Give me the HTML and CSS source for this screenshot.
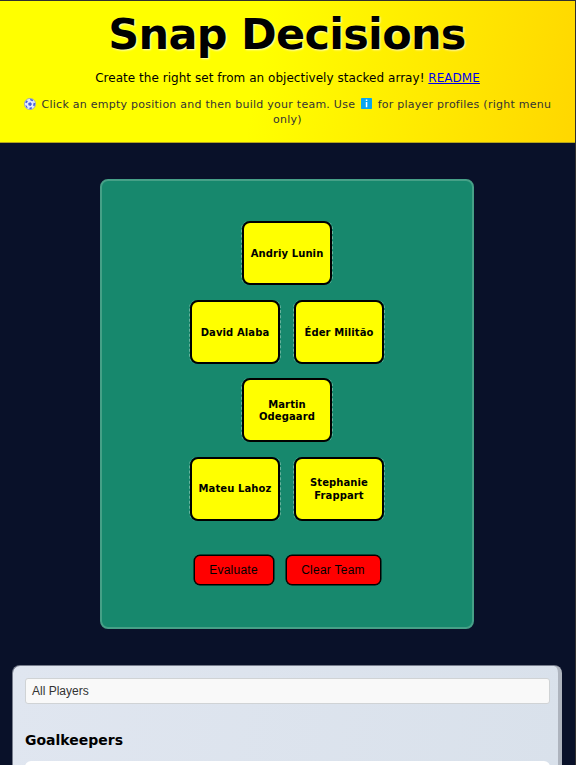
FILE: index.html
```html
<!DOCTYPE html>
<html lang="en">
<head>
<meta charset="utf-8">
<title>Snap Decisions</title>
<link rel="stylesheet" href="styles.css">
</head>
<body>
<header class="hero">
  <h1 class="title">Snap Decisions</h1>
  <p class="tagline">Create the right set from an objectively stacked array! <a href="#">README</a></p>
  <p class="hint"><svg class="ball" viewBox="0 0 12 12"><circle cx="6" cy="6" r="5.6" fill="#e4eafa" stroke="#8f9bc0" stroke-width=".7"/><path d="M4.3 5.1 6.6 4.3 8 6.1 6.6 8 4.4 7.3zM1 4.2 2.7 2.2 3.9 3.4 2.5 5.3zM6 .8 9.2 1.8 8.7 3.3 6.5 2.6zM9.6 4.8 11.3 5.3 10.5 8.5 9.1 7.4zM5.7 9.4 8 9.3 7.5 11.2 5.3 11.1zM1.2 7.3 2.8 7.8 3.7 9.9 2.5 9.8z" fill="#4560e0"/></svg><span> Click an empty position and then build your team. Use </span><svg class="info" viewBox="0 0 11 11"><rect width="11" height="11" rx=".7" fill="#08a5f2"/><path d="M4.8 1.6h1.5v1.3H4.8zM4.8 4h1.5v5.2H4.8z" fill="#fff"/></svg><span> for player profiles (right menu<br>only)</span></p>
</header>
<main>
  <section class="pitch">
    <div class="row"><div class="spot"><div class="slot">Andriy Lunin</div></div></div>
    <div class="row low"><div class="spot"><div class="slot">David Alaba</div></div><div class="spot"><div class="slot">Éder Militão</div></div></div>
    <div class="row"><div class="spot"><div class="slot">Martin<br>Odegaard</div></div></div>
    <div class="row"><div class="spot"><div class="slot">Mateu Lahoz</div></div><div class="spot"><div class="slot">Stephanie<br>Frappart</div></div></div>
    <div class="actions"><button class="btn evaluate">Evaluate</button><button class="btn clear">Clear Team</button></div>
  </section>
  <section class="players">
    <div class="filter">All Players</div>
    <h2 class="group">Goalkeepers</h2>
    <div class="list"></div>
  </section>
</main>
</body>
</html>
```
FILE: styles.css
```css
* { box-sizing: border-box; }
html { height: 765px; overflow: hidden; background: #091129; }
body { margin: 0; height: 765px; overflow: hidden; border-top: 1px solid #303030; border-right: 1px solid #303030; background: #091129; color: #000; font-family: Verdana, "DejaVu Sans", sans-serif; }
.hero { height: 142px; padding-top: 7px; text-align: center; background: linear-gradient(100deg, #ffff00 0%, #ffff00 45%, #ffd700 100%); border-bottom: 1px solid #b5a51c; }
.title { margin: 0 0 0 -1px; font-size: 43px; line-height: 52px; font-weight: 700; letter-spacing: -.72px; white-space: nowrap; text-shadow: 1px 1px 2px rgba(255,255,255,.8); }
.tagline { margin: 9px 0 0; font-size: 12px; line-height: 18px; letter-spacing: .035px; white-space: nowrap; }
.tagline a { color: #0000ee; }
.hint { margin: 10px 0 0; font-size: 11px; line-height: 15px; letter-spacing: .25px; color: #333; white-space: nowrap; }
.ball { width: 12px; height: 12px; vertical-align: -2px; margin-right: 2px; }
.info { width: 11px; height: 11px; vertical-align: -1px; margin: 0 2px 0 2px; }
.pitch { width: 374px; height: 450px; margin: 36px 0 0 100px; padding-top: 40px; border: 2px solid #46a087; border-radius: 8px; background: #17886d; }
.row { display: flex; justify-content: center; gap: 12px; margin-bottom: 14.5px; }
.spot { width: 92px; height: 64px; border: 1px dashed #68b39e; border-width: 0 1px; border-radius: 8px; }
.slot { display: flex; align-items: center; justify-content: center; width: 90px; height: 64px; padding-top: 2px; border: 2px solid #000; border-radius: 8px; background: #ffff00; font-size: 10px; font-weight: 700; line-height: 12.5px; letter-spacing: .1px; text-align: center; white-space: nowrap; }
.low .slot { padding-top: 3px; }
.actions { display: flex; justify-content: center; gap: 12px; margin-top: 34px; }
.btn { height: 30px; padding: 0; border: 1px solid #000; border-radius: 6px; background: #ff0000; box-shadow: 0 0 0 .5px #000; color: #000; font: 12px "Liberation Sans", sans-serif; letter-spacing: .25px; }
.evaluate { width: 80px; }
.clear { width: 95px; }
.players { width: 550px; height: 110px; margin: 36px 0 0 12px; padding: 12px 9px 0 12px; border: 1px solid #777d8c; border-right: 4px solid #aeb4be; border-bottom: 0; border-radius: 8px 8px 0 0; background: linear-gradient(100deg, #e0e6f0, #d9e1eb); }
.filter { width: 525px; height: 26px; padding-left: 6px; border: 1px solid #d0d3d5; border-radius: 3px; background: #f9f9f9; color: #333; font: 12px/24px "Liberation Sans", sans-serif; }
.group { margin: 27px 0 12px; font-size: 14px; line-height: 18px; }
.list { width: 525px; height: 20px; border-radius: 6px 6px 0 0; background: #fff; }
```
